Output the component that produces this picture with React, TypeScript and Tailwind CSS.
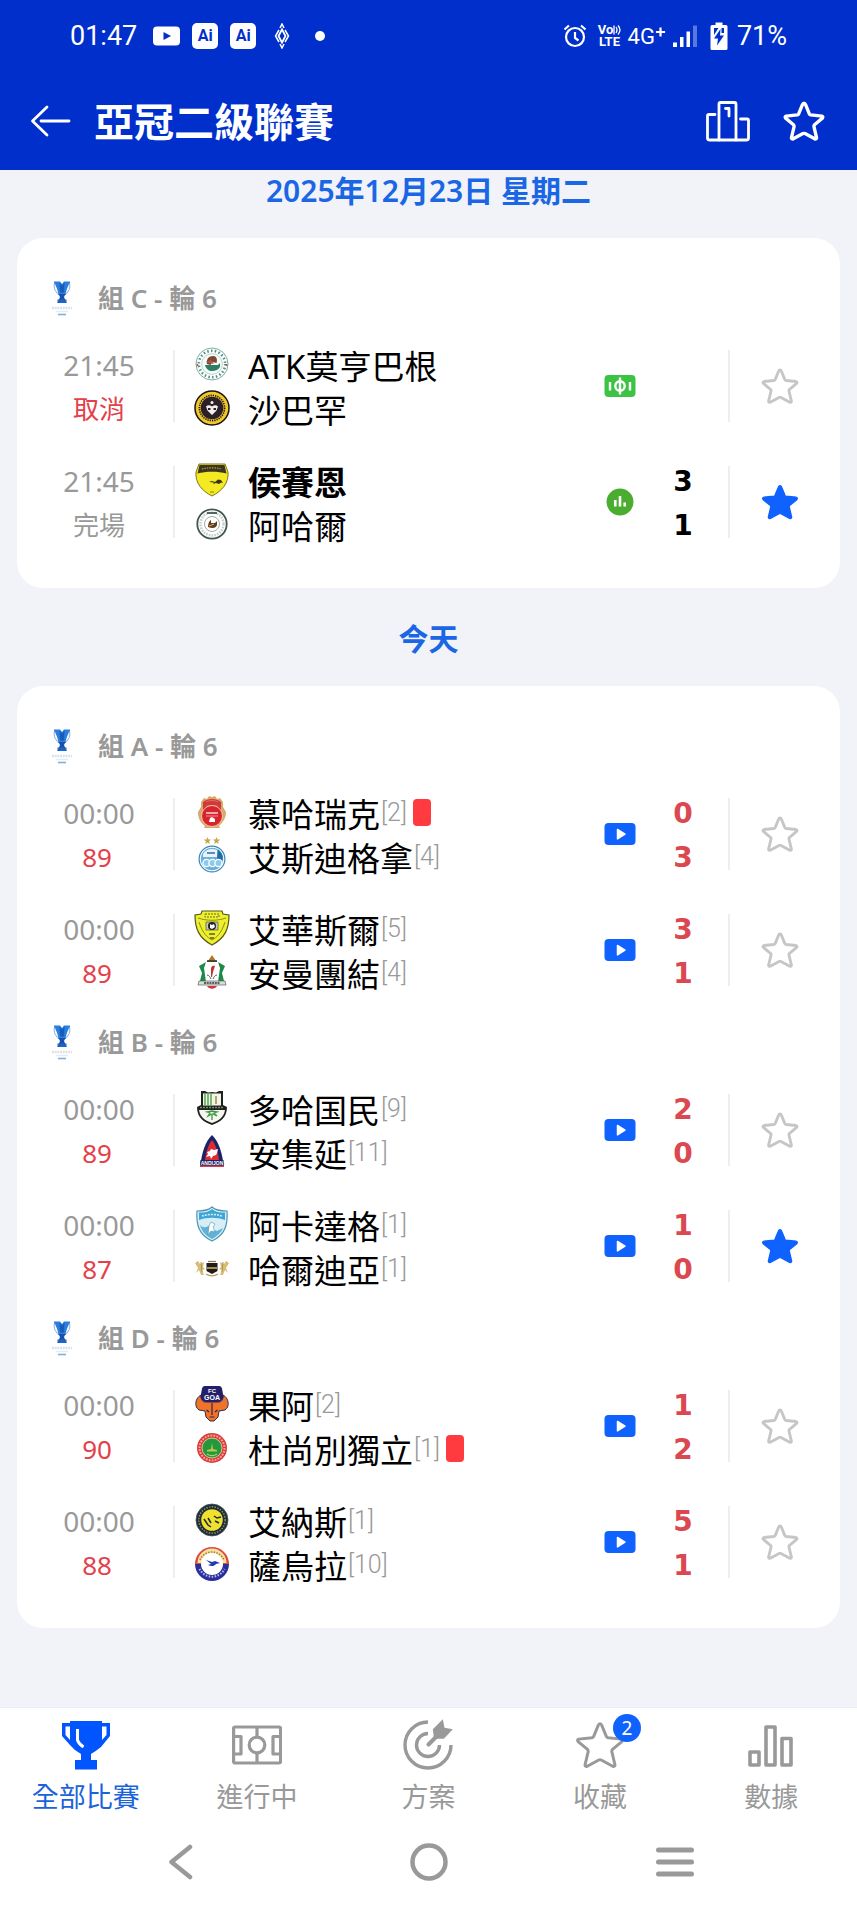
import React, { useState } from "react";

type Team = {
  name: string;
  rank?: number;
  redCard?: boolean;
  winner?: boolean;
  crest: React.ReactNode;
};

type Match = {
  id: string;
  time: string;
  status: string;
  state: "live" | "cancelled" | "finished";
  home: Team;
  away: Team;
  score?: [number, number];
  favourite?: boolean;
};

type Group = { title: string; matches: Match[] };

const crestClass = "size-9 overflow-visible";

const MohunBagan = () => (
  <svg viewBox="0 0 36 36" className={crestClass} aria-hidden="true">
    <circle cx="18" cy="18" r="16" fill="#fff" stroke="#6ea597" strokeWidth="0.900" />
    <circle cx="18" cy="18" r="13.200" fill="none" stroke="#4c8f80" strokeWidth="2.600" strokeDasharray="1.500 2.300" />
    <circle cx="18" cy="18" r="10.400" fill="#f7faf8" stroke="#8dbcae" strokeWidth="0.600" />
    <path d="M13 18C12 13 15 9.500 20 10c3 1 3.500 4 2.500 7l-4-1-2 3Z" fill="#7a4b34" />
    <path d="M11 19h13l2-2v4c-2 3-5 4-8 4s-6-2-7-6Z" fill="#2d7f63" />
    <path d="M12 16l5-2 3 4Z" fill="#c24c43" />
    <circle cx="3.500" cy="19" r="1" fill="#d33" />
    <circle cx="32.500" cy="19" r="1" fill="#d33" />
  </svg>
);

const Sabah = () => (
  <svg viewBox="0 0 36 36" className={crestClass} aria-hidden="true">
    <circle cx="18" cy="18" r="17" fill="#efc92c" stroke="#1b1512" strokeWidth="1.500" />
    <circle cx="18" cy="18" r="12.600" fill="none" stroke="#1b1512" strokeWidth="1.600" strokeDasharray="1.300 1" />
    <circle cx="18" cy="18" r="11.300" fill="#2b2029" />
    <path d="M12 16.500c2-2 4-1.500 6 0 2-1.500 4-2 6 0l-1.500 4L18 25l-4.500-4.500Z" fill="#f2efe9" />
    <path d="M14 18h2.500v2H14Zm5.500 0H22v2h-2.500Z" fill="#2b2029" />
    <circle cx="18" cy="12.500" r="1.500" fill="#f2efe9" />
  </svg>
);

const Hussein = () => (
  <svg viewBox="0 0 36 36" className={crestClass} aria-hidden="true">
    <path d="M5 2h26l3 8c1 11-6 19-16 24C8 29 1 21 2 10Z" fill="#f3ea22" stroke="#7c7620" strokeWidth="1" />
    <path d="M5.500 3h25l2 8.500C24 9 12 9 3.500 11.500Z" fill="#3c3620" />
    <path d="M8 7c6-1.500 14-1.500 20 0" fill="none" stroke="#a9a04b" strokeWidth="1.200" strokeDasharray="1.500 1" />
    <path d="M15 20l3-1 3 1 3-2.500 3 0.500 2 3-2-0.500-2 1.500-3-1-3 1 1-1.500Z" fill="#38331a" />
    <path d="M16 30h4" stroke="#8c8520" strokeWidth="1" />
  </svg>
);

const Ahal = () => (
  <svg viewBox="0 0 36 36" className={crestClass} aria-hidden="true">
    <circle cx="18" cy="18" r="14.700" fill="#fff" stroke="#41564f" strokeWidth="1.800" />
    <circle cx="18" cy="18" r="11.500" fill="none" stroke="#c5ccc9" strokeWidth="2.500" strokeDasharray="1.600 1.200" />
    <circle cx="18" cy="18" r="7.500" fill="#fff" stroke="#8b9792" strokeWidth="0.800" />
    <path d="M14 21c0-3 1-6 3-7l0 3 4 0 2-2v4c-1 3-4 4-9 2Z" fill="#5c3c22" />
    <path d="M15 20l5-2" stroke="#e3a740" strokeWidth="1.200" />
    <path d="M13 7h10" stroke="#30483f" strokeWidth="1.600" />
  </svg>
);

const Muharraq = () => (
  <svg viewBox="0 0 36 36" className={crestClass} aria-hidden="true">
    <path d="M7 8l3-4 3 1 2-3 3 1 3-1 2 3 3-1 3 4v5l3 5c0 7-4 11-7 14l1 2H10l1-2C7 29 4 25 4 18l3-5Z" fill="#d9a86b" />
    <path d="M9 8c5-4 13-4 18 0v8H9Z" fill="#cf3a38" />
    <path d="M12 8c4-2 8-2 12 0M12 12h12" fill="none" stroke="#e0705f" strokeWidth="1" />
    <ellipse cx="18" cy="22" rx="10.500" ry="10.500" fill="#d8242c" stroke="#f5e2cb" strokeWidth="0.800" />
    <path d="M12 19h12" fill="none" stroke="#fff" strokeWidth="1.200" />
    <path d="M12 22h12" stroke="#f3a7a3" strokeWidth="0.800" />
    <path d="M15 28l1-4 2-1 3 2v3Z" fill="#fff" />
  </svg>
);

const Esteghlal = () => (
  <svg viewBox="0 0 36 36" className={crestClass} aria-hidden="true">
    <path d="M13.500 -1l1 2.400 2.600 0.200-2 1.700 0.600 2.600-2.200-1.400-2.200 1.400 0.600-2.600-2-1.700 2.600-0.200Zm9 0l1 2.400 2.600 0.200-2 1.700 0.600 2.600-2.200-1.400-2.200 1.400 0.600-2.600-2-1.700 2.600-0.200Z" fill="#c7a64b" />
    <circle cx="18" cy="21" r="12.900" fill="#fff" stroke="#3b87b5" strokeWidth="1.200" />
    <circle cx="18" cy="21" r="11.200" fill="#67b1dc" />
    <path d="M9 16c3-5 9-6 14-4v7H9Z" fill="#e9f4fa" />
    <path d="M13 15h8" stroke="#2a6c9b" strokeWidth="1.500" />
    <path d="M24 11.500c5 4 6 9 3 14l-4-4Z" fill="#1e6da3" />
    <g fill="#8ccbed" stroke="#fff" strokeWidth="1.300">
      <circle cx="12.500" cy="25" r="3.600" />
      <circle cx="18.500" cy="25" r="3.600" />
      <circle cx="24.500" cy="25" r="3.600" />
    </g>
  </svg>
);

const Wasl = () => (
  <svg viewBox="0 0 36 36" className={crestClass} aria-hidden="true">
    <path d="M8 1h20l1 3 6 1c0 14-4 23-17 30C5 28 1 19 1 5l6-1Z" fill="#eef02c" stroke="#55571b" strokeWidth="1.200" />
    <path d="M4 8c9 3 19 3 28 0M5 12c4 12 8 15 13 18 5-3 9-6 13-18" fill="none" stroke="#8b8c28" strokeWidth="1" />
    <path d="M11 4h14v3H11Z" fill="none" stroke="#6c6d24" strokeWidth="1" strokeDasharray="2 1" />
    <path d="M12 12h12v8H12Z" fill="#c8cac1" stroke="#55571b" strokeWidth="0.700" />
    <circle cx="18" cy="16" r="4" fill="#222" />
    <path d="M16 14l2 1 2-1 1 3-3 2-2-1Z" fill="#fff" />
    <path d="M15 24h6M16 28h4" stroke="#5c5d20" strokeWidth="1.500" />
  </svg>
);

const Wehdat = () => (
  <svg viewBox="0 0 36 36" className={crestClass} aria-hidden="true">
    <path d="M14 7l4-6 4 6Z" fill="#b0762b" />
    <path d="M5 12l9-5h8l9 5-3 7 2 8H6l2-8Z" fill="#1d8a49" />
    <path d="M12 8h12l2 6-2 14H12l-2-14Z" fill="#fff" />
    <path d="M13 7h10" stroke="#3e3a22" strokeWidth="1.600" />
    <path d="M17 15c0-3 2-4 4-3l-1 3-1 3-1 5h-1Z" fill="#c62f33" />
    <path d="M13 21c2 0 3 2 4 4M23 21c-2 0-3 2-4 4" fill="none" stroke="#4b4b4b" strokeWidth="0.900" />
    <path d="M5 27h26l1 4H4Z" fill="#d9ded9" stroke="#59625c" strokeWidth="0.700" />
    <path d="M10 29h16" stroke="#333" strokeWidth="1.300" strokeDasharray="2 0.700" />
    <path d="M13 32h10c-2 3.500-8 3.500-10 0Z" fill="#cf3540" />
  </svg>
);

const DohaAhli = () => (
  <svg viewBox="0 0 36 36" className={crestClass} aria-hidden="true">
    <path d="M7 1h4l3 1.500L18 2l4 0.500L25 1h4v14l4 2c0 11-7 15-15 18C10 32 3 28 3 17l4-2Z" fill="#1e221c" />
    <path d="M9 3.500h18v12H9Z" fill="#f4f5e9" />
    <path d="M11 4v12M14 4v12M17 4v12" stroke="#5fae57" strokeWidth="1.600" />
    <path d="M22 6v8" stroke="#9a8c42" strokeWidth="1.500" />
    <path d="M5 20h26c-1 7-6 10.500-13 13C11 30.500 6 27 5 20Z" fill="#f6f8f0" />
    <path d="M6 17.500h24" stroke="#7e8477" strokeWidth="1.300" strokeDasharray="2 1" />
    <path d="M18 30v-6l-4 2 2-3-3-1 5-1 5 1-3 1 3 3-4-2" fill="none" stroke="#3d9a45" strokeWidth="1.300" />
  </svg>
);

const Andijan = () => (
  <svg viewBox="0 0 36 36" className={crestClass} aria-hidden="true">
    <path d="M18 1c7 7 10 17 12 32H6C8 18 11 8 18 1Z" fill="#1b2466" />
    <path d="M18 6c4 5 6 12 7 20H11c1-8 3-15 7-20Z" fill="#dc2b35" />
    <path d="M13 18l3-1 1-2 3 1 4-1-1 4-1 2-3 1-2 3-1-3-4 1 2-3Z" fill="#fff" />
    <path d="M6.500 26h23l0.700 5H6Z" fill="#1b2466" />
    <text x="18" y="30.500" textAnchor="middle" fontSize="5" fontWeight="700" fill="#fff" fontFamily="Liberation Sans, sans-serif">ANDIJON</text>
    <path d="M6 31.500h24V33H6Z" fill="#d43f4a" />
  </svg>
);

const Arkadag = () => (
  <svg viewBox="0 0 36 36" className={crestClass} aria-hidden="true">
    <path d="M18 1c3 3 8 4 15 4 1 14-2 24-15 30C5 29 2 19 3 5c7 0 12-1 15-4Z" fill="#d8eef7" stroke="#4a94b4" strokeWidth="1.200" />
    <path d="M18 3c3 3 8 3.500 13 3.500V14c-8-3-18-3-26 0V6.500C10 6.500 15 6 18 3Z" fill="#3fa6d4" />
    <path d="M8 10c6-2 14-2 20 0" fill="none" stroke="#d8eef7" strokeWidth="1.500" strokeDasharray="2 1" />
    <path d="M6 19c6 6 10-2 13-1l-1 5 5 2 6-3c-2 5-6 8-11 11C12 30 8 26 6 19Z" fill="#5fb1d5" />
    <path d="M15 20l2-4 4 2-2 3 2 5-4-1-3 4Z" fill="#fff" stroke="#5b93a8" strokeWidth="0.600" />
  </svg>
);

const Khaldiya = () => (
  <svg viewBox="0 0 36 36" className={crestClass} aria-hidden="true">
    <path d="M1 13l3-2 2 3 4-2-1 5 2 2-3 1 2 5H7l-2-5-3 3 2-5Z" fill="#d9bd73" />
    <path d="M35 13l-3-2-2 3-4-2 1 5-2 2 3 1-2 5h3l2-5 3 3-2-5Z" fill="#d9bd73" />
    <path d="M7 12l1 10M29 12l-1 10" stroke="#a18b50" strokeWidth="0.900" />
    <path d="M12.500 13h11v8l-5.500 3-5.500-3Z" fill="#1d1c18" />
    <path d="M13 17h10v2H13Z" fill="#a58e4e" />
    <path d="M14 11.500h8" stroke="#8f8049" strokeWidth="1.300" />
    <path d="M12 24c4 2.500 8 2.500 12 0" fill="none" stroke="#b29b5c" strokeWidth="1.100" />
  </svg>
);

const Goa = () => (
  <svg viewBox="0 0 36 36" className={crestClass} aria-hidden="true">
    <path d="M7 9C1 12 0 21 5 24l6 1 1 6 4 4h4l4-4 1-6 6-1c5-3 4-12-2-15 0 5-1 7-5 7H12c-4 0-5-2-5-7Z" fill="#ef7328" stroke="#33264f" strokeWidth="1" />
    <path d="M8 2.500Q8.500 0 10.500 0h15Q27.500 0 28 2.500L29.500 11Q28 16 24 16H12Q8 16 6.500 11Z" fill="#231f68" />
    <text x="18" y="6.800" textAnchor="middle" fontSize="6" fontWeight="700" fill="#fff" fontFamily="Liberation Sans, sans-serif">FC</text>
    <text x="18" y="13.800" textAnchor="middle" fontSize="7" fontWeight="700" fill="#fff" fontFamily="Liberation Sans, sans-serif">GOA</text>
    <path d="M12.500 24l2.500 2M23.500 24l-2.500 2M18 17v12M15.500 31h5" stroke="#33264f" strokeWidth="1.200" fill="none" />
  </svg>
);

const Istiklol = () => (
  <svg viewBox="0 0 36 36" className={crestClass} aria-hidden="true">
    <circle cx="18" cy="18" r="15" fill="#d93b3b" />
    <circle cx="18" cy="18" r="12.500" fill="none" stroke="#f0a79c" strokeWidth="2" strokeDasharray="1.800 1.200" />
    <circle cx="18" cy="18" r="10" fill="#25983f" stroke="#f1d9a8" strokeWidth="0.800" />
    <path d="M13 20l4-1 1-6 1 6 4 1v1.500H13Z" fill="#b9c84a" />
    <path d="M13 24c3 2 7 2 10 0" fill="none" stroke="#a5d36b" strokeWidth="1.200" />
  </svg>
);

const Nassr = () => (
  <svg viewBox="0 0 36 36" className={crestClass} aria-hidden="true">
    <circle cx="18" cy="18" r="16" fill="#1d2b3a" stroke="#4a5360" strokeWidth="0.800" />
    <circle cx="18" cy="18" r="13.200" fill="none" stroke="#8f9250" strokeWidth="1.500" strokeDasharray="1.500 1.300" />
    <circle cx="18" cy="18" r="10.800" fill="#efe12d" />
    <path d="M10 17l4 6 3 2M14 16l3 5M20 14l3 2 4-1M21 19l4 2" stroke="#1d2b3a" strokeWidth="1.500" fill="none" />
  </svg>
);

const Zawraa = () => (
  <svg viewBox="0 0 36 36" className={crestClass} aria-hidden="true">
    <path d="M1 18a17 17 0 0 1 34 0Z" fill="#e0483e" />
    <path d="M1 18a17 17 0 0 0 34 0Z" fill="#2b2f9e" />
    <path d="M3.500 17a14.500 14.500 0 0 1 29 0Z" fill="#f6e3a0" />
    <path d="M6 14a13 13 0 0 1 24 0" fill="none" stroke="#b5793a" strokeWidth="1.600" strokeDasharray="1.500 1.300" />
    <path d="M5.500 23a14 14 0 0 0 25 0" fill="none" stroke="#b8bbe2" strokeWidth="2" strokeDasharray="1.500 1.500" />
    <circle cx="18" cy="18" r="11" fill="#fff" />
    <path d="M12 14l6 2 3-1 5 2-4 1c-2 2.500-5 2.500-8 1l3-1Z" fill="#1f3cb0" />
  </svg>
);

const days: { label: string; groups: Group[] }[] = [
  {
    label: "2025年12月23日 星期二",
    groups: [
      {
        title: "組 C - 輪 6",
        matches: [
          { id: "c1", time: "21:45", status: "取消", state: "cancelled", home: { name: "ATK莫亨巴根", crest: <MohunBagan /> }, away: { name: "沙巴罕", crest: <Sabah /> } },
          { id: "c2", time: "21:45", status: "完場", state: "finished", home: { name: "侯賽恩", winner: true, crest: <Hussein /> }, away: { name: "阿哈爾", crest: <Ahal /> }, score: [3, 1], favourite: true },
        ],
      },
    ],
  },
  {
    label: "今天",
    groups: [
      {
        title: "組 A - 輪 6",
        matches: [
          { id: "a1", time: "00:00", status: "89", state: "live", home: { name: "慕哈瑞克", rank: 2, redCard: true, crest: <Muharraq /> }, away: { name: "艾斯迪格拿", rank: 4, crest: <Esteghlal /> }, score: [0, 3] },
          { id: "a2", time: "00:00", status: "89", state: "live", home: { name: "艾華斯爾", rank: 5, crest: <Wasl /> }, away: { name: "安曼團結", rank: 4, crest: <Wehdat /> }, score: [3, 1] },
        ],
      },
      {
        title: "組 B - 輪 6",
        matches: [
          { id: "b1", time: "00:00", status: "89", state: "live", home: { name: "多哈国民", rank: 9, crest: <DohaAhli /> }, away: { name: "安集延", rank: 11, crest: <Andijan /> }, score: [2, 0] },
          { id: "b2", time: "00:00", status: "87", state: "live", home: { name: "阿卡達格", rank: 1, crest: <Arkadag /> }, away: { name: "哈爾迪亞", rank: 1, crest: <Khaldiya /> }, score: [1, 0], favourite: true },
        ],
      },
      {
        title: "組 D - 輪 6",
        matches: [
          { id: "d1", time: "00:00", status: "90", state: "live", home: { name: "果阿", rank: 2, crest: <Goa /> }, away: { name: "杜尚別獨立", rank: 1, redCard: true, crest: <Istiklol /> }, score: [1, 2] },
          { id: "d2", time: "00:00", status: "88", state: "live", home: { name: "艾納斯", rank: 1, crest: <Nassr /> }, away: { name: "薩烏拉", rank: 10, crest: <Zawraa /> }, score: [5, 1] },
        ],
      },
    ],
  },
];

const StarIcon = ({ className }: { className: string }) => (
  <svg viewBox="0 0 40 40" className={className} strokeLinejoin="round" aria-hidden="true">
    <path d="M20 3Q21 3 21.500 4.500L25 13Q25.500 14 26.500 14.200L37 15.300Q38.600 15.800 37.500 17.300L30 23.500Q29.200 24.300 29.500 25.500L32 36Q31.800 37.500 30.200 37L21 32Q20 31.500 19 32L9.800 37Q8.200 37.500 8 36L10.500 25.500Q10.800 24.300 10 23.500L2.500 17.300Q1.400 15.800 3 15.300L13.500 14.200Q14.500 14 15 13L18.500 4.500Q19 3 20 3Z" />
  </svg>
);

const CupLogo = () => (
  <svg viewBox="0 0 26 36" className="h-9 w-[26px]" aria-hidden="true">
    <path d="M5.500 3.500C4.500 8 6 12 10.500 15M20.500 3.500C21.500 8 20 12 15.500 15" fill="none" stroke="#9dbbe8" strokeWidth="1.200" />
    <path d="M5 1.500h6l2 2.500 2-2.500h6q0.500 1.500-1 2.500-2 4-3.500 10l0.500 1h-8l0.500-1Q8 8 6 4 4.500 3 5 1.500Z" fill="#2b7fdc" />
    <path d="M10.500 2.500l2.500 3 2.500-3-0.500 10h-4Z" fill="#195bbb" />
    <path d="M9.500 14h7l-1.500 3 2.500 6h-9l2.500-6Z" fill="#1b4fae" />
    <path d="M8.500 19.500h9V23h-9Z" fill="#1f62c8" />
    <path d="M3 28h20" stroke="#dde1e8" strokeWidth="2.400" strokeDasharray="2 0.700" />
    <path d="M7 31.500h12" stroke="#e6ebf1" strokeWidth="1.500" />
    <path d="M9 34.500h8" stroke="#7fb0dc" strokeWidth="1.600" />
  </svg>
);

const StateIcon = ({ state }: { state: Match["state"] }) => {
  if (state === "cancelled")
    return (
      <svg viewBox="0 0 32 24" className="h-6 w-8" role="img" aria-label="陣容">
        <rect x="0.500" y="1" width="31" height="22" rx="4" fill="#3cc343" />
        <g fill="none" stroke="#fff" strokeWidth="2.400">
          <path d="M6 8v8.500M26 8v8.500M16 3.500v17" />
          <circle cx="16" cy="12" r="4.700" />
        </g>
      </svg>
    );
  if (state === "finished")
    return (
      <svg viewBox="0 0 28 28" className="size-7" role="img" aria-label="統計">
        <circle cx="14" cy="14" r="13.500" fill="#4aad2f" />
        <path d="M9.300 12v6.500M14 8v10.500M18.700 14.500v4" stroke="#fff" strokeWidth="2.600" />
      </svg>
    );
  return (
    <svg viewBox="0 0 32 24" className="h-6 w-8" role="img" aria-label="直播">
      <rect x="0.500" y="1" width="31" height="22" rx="4" fill="#0f62fe" />
      <path d="M13.500 7.500l7.500 4.700-7.500 4.700Z" fill="#fff" stroke="#fff" strokeWidth="1.500" strokeLinejoin="round" />
    </svg>
  );
};

const TeamLine = ({ team }: { team: Team }) => (
  <div className="flex h-11 items-center">
    <span className="flex w-[73px] shrink-0 justify-center">{team.crest}</span>
    <span className={team.winner ? "pt-[5px] text-[33px] leading-[44px] font-bold text-black" : "pt-[5px] text-[33px] leading-[44px] text-black"}>{team.name}</span>
    {team.rank !== undefined && <span className="ml-px pt-[2px] font-['Roboto'] text-[25px] leading-[44px] font-light text-[#999999]">[{team.rank}]</span>}
    {team.redCard && <span role="img" aria-label="紅牌" className="ml-[6px] h-[27px] w-[18px] rounded-sm bg-[#ff3b40]" />}
  </div>
);

const MatchRow = ({ match }: { match: Match }) => {
  const [starred, setStarred] = useState(!!match.favourite);
  return (
    <li className="flex h-[116px] items-center">
      <div className="flex w-[156px] shrink-0 flex-col items-center pt-[2px] pl-2 text-[28px] leading-[44px] text-[#999999]">
        <span>{match.time}</span>
        <span className={match.state === "finished" ? "text-[26px]" : match.state === "live" ? "pr-1 text-[26px] text-[#e5404a]" : "text-[26px] text-[#e5404a]"}>{match.status}</span>
      </div>
      <div className="h-[72px] w-[2px] shrink-0 bg-[#eeeeee]" />
      <div className="min-w-0 flex-1">
        <TeamLine team={match.home} />
        <TeamLine team={match.away} />
      </div>
      <div className="flex w-10 shrink-0 justify-center">
        <StateIcon state={match.state} />
      </div>
      <div className={match.state === "live" ? "w-[88px] shrink-0 pt-[4px] pr-[2px] text-center font-['DejaVu_Sans'] text-[28px] leading-[44px] font-bold text-[#dc4850]" : "w-[88px] shrink-0 pt-[4px] pr-[2px] text-center font-['DejaVu_Sans'] text-[28px] leading-[44px] font-bold text-black"}>
        {match.score?.map((goals, i) => <div key={i}>{goals}</div>)}
      </div>
      <div className="h-[72px] w-[2px] shrink-0 bg-[#eeeeee]" />
      <div className="flex w-[110px] shrink-0 justify-center pr-[11px]">
        <button type="button" aria-label="收藏比賽" aria-pressed={starred} onClick={() => setStarred(!starred)}>
          <StarIcon className={starred ? "size-[38px] fill-[#0f62fe] stroke-[#0f62fe] stroke-[2]" : "size-[38px] fill-none stroke-[#c6c6c6] stroke-[3]"} />
        </button>
      </div>
    </li>
  );
};

const StatusBar = () => (
  <div className="flex h-[72px] items-center justify-between px-[70px] font-['Roboto'] text-[27px] leading-none text-white">
    <div className="flex items-center">
      <span>01:47</span>
      <svg viewBox="0 0 27 20" className="ml-4 h-5 w-[27px]" aria-hidden="true">
        <rect y="0.500" width="27" height="19" rx="4" fill="#fff" />
        <path d="M10.500 6l7.500 4-7.500 4Z" fill="#002fcc" />
      </svg>
      <span className="ml-3 flex size-[26px] items-center justify-center rounded-[5px] bg-white text-base font-bold text-[#002fcc]">Ai</span>
      <span className="ml-3 flex size-[26px] items-center justify-center rounded-[5px] bg-white text-base font-bold text-[#002fcc]">Ai</span>
      <svg viewBox="0 0 16 26" className="ml-[18px] h-[26px] w-4" fill="none" stroke="#fff" strokeWidth="1.500" aria-hidden="true">
        <path d="M6 5L8 1l2 4M6 21l2 4 2-4" />
        <path d="M5 7L1.500 13 5 19M11 7l3.500 6L11 19" />
        <path d="M8 6.500L11.500 13 8 19.500 4.500 13Z" strokeWidth="1.800" />
      </svg>
      <span className="ml-[25px] size-[10px] rounded-full bg-white" />
    </div>
    <div className="flex items-center">
      <svg viewBox="0 0 24 24" className="size-6" fill="none" stroke="#fff" strokeWidth="2.200" aria-hidden="true">
        <circle cx="12" cy="13" r="9" />
        <path d="M12 8v6l3.500 2.500M1.500 5.500L6 1.500M22.500 5.500L18 1.500" />
      </svg>
      <span className="ml-[11px] flex w-6 flex-col items-center text-[13px] leading-3 font-bold">
        <span className="flex items-center">
          Vo
          <svg viewBox="0 0 8 10" className="h-[10px] w-2" fill="none" stroke="#fff" strokeWidth="1.300" aria-hidden="true">
            <path d="M1 0.500v9M3 2q2 3 0 6M5 0.500q4 4.500 0 9" />
          </svg>
        </span>
        <span>LTE</span>
      </span>
      <span className="ml-[6px] flex items-start">
        <span className="text-[22px] leading-[23px]">4G</span>
        <svg viewBox="0 0 12 12" className="mt-px h-3 w-[11px]" stroke="#fff" strokeWidth="2.400" aria-hidden="true"><path d="M6 1v10M1 6h10" /></svg>
      </span>
      <svg viewBox="0 0 26 24" className="ml-[6px] h-6 w-[26px]" fill="#fff" aria-hidden="true">
        <path d="M1 18.500h4V23H1ZM8 13h3.500v10H8ZM14.500 7.500H18V23h-3.500Z" />
        <path d="M21 1.500h4V23h-4Z" opacity="0.350" />
      </svg>
      <svg viewBox="0 0 18 28" className="ml-3 h-7 w-[18px]" aria-hidden="true">
        <path d="M5.500 0.500h7V3H16a1.500 1.500 0 0 1 1.500 1.500v22A1.500 1.500 0 0 1 16 28H2a1.500 1.500 0 0 1-1.500-1.500v-22A1.500 1.500 0 0 1 2 3h3.500Z" fill="#fff" />
        <path d="M4 6h4.500L4 13ZM11.500 6H14v5l-2.500 0ZM10.500 7L4 16.500h4L7 23.500l7-10h-4Z" fill="#002fcc" />
      </svg>
      <span className="ml-[9px]">71%</span>
    </div>
  </div>
);

const AppBar = () => (
  <div className="flex h-[98px] items-center pr-8 pl-[30px] text-white">
    <button type="button" aria-label="返回">
      <svg viewBox="0 0 42 32" className="h-8 w-[42px]" fill="none" stroke="#fff" strokeWidth="2.800" strokeLinecap="round" strokeLinejoin="round" aria-hidden="true">
        <path d="M17 2L2.500 16 17 30M11 16h28" />
      </svg>
    </button>
    <h1 className="ml-[22px] flex-1 pt-[2px] text-[40px] leading-[48px] font-bold">亞冠二級聯賽</h1>
    <button type="button" aria-label="排名">
      <svg viewBox="0 0 46 42" className="h-[42px] w-[46px]" fill="none" stroke="#fff" strokeWidth="2.800" strokeLinejoin="round" strokeLinecap="round" aria-hidden="true">
        <path d="M14 40V4q0-1.500 1.500-1.500h14Q31 2.500 31 4v36" />
        <path d="M10 14.500H4Q2.500 14.500 2.500 16v22q0 2 2 2h37q2 0 2-2V20.500q0-1.500-1.500-1.500h-6.500" />
        <path d="M20.500 8.500H24V16" />
      </svg>
    </button>
    <button type="button" aria-label="收藏聯賽" className="ml-8">
      <StarIcon className="size-[42px] fill-none stroke-white stroke-[3.2]" />
    </button>
  </div>
);

const tabs = [
  {
    label: "全部比賽",
    icon: (
      <svg viewBox="0 0 50 50" className="size-[50px]" aria-hidden="true">
        <path d="M9 1h32v2h8v13L40 27q-5 4-10 7v6h6v9.500H14V40h6v-6Q13 30 9 25L1 16V3h8Z" fill="#0055ff" />
        <path d="M4.500 6.500H9V20l-4.500-5ZM45.500 6.500H41V20l4.500-5Z" fill="#fff" />
        <path d="M16.500 9v11q1 3.500 6 7" fill="none" stroke="#fff" strokeWidth="3" />
      </svg>
    ),
  },
  {
    label: "進行中",
    icon: (
      <svg viewBox="0 0 50 50" className="size-[50px]" fill="none" stroke="#999" strokeWidth="3.200" strokeLinejoin="round" aria-hidden="true">
        <rect x="1.600" y="7" width="47" height="36" rx="1.500" />
        <path d="M25 7v10M25 33v10M2 16.500h7V34H2M48 16.500h-7V34h7" />
        <circle cx="25" cy="25" r="7.800" />
      </svg>
    ),
  },
  {
    label: "方案",
    icon: (
      <svg viewBox="0 0 50 50" className="size-[50px] overflow-visible" fill="none" stroke="#999" strokeWidth="3.400" aria-hidden="true">
        <path d="M25 2A23 23 0 1 0 48 25" />
        <path d="M25 13.500A11.500 11.500 0 1 0 36.500 25" />
        <path d="M25.500 24.500L34 16" strokeWidth="4" strokeLinecap="round" />
        <path d="M29.800 9.300L39.800 -0.700 41.500 7.700 49.800 9.300 40.800 18.700H31Z" fill="#999" stroke="none" />
      </svg>
    ),
  },
  { label: "收藏", badge: 2, icon: <StarIcon className="size-[50px] fill-none stroke-[#999999] stroke-[2.4]" /> },
  {
    label: "數據",
    icon: (
      <svg viewBox="0 0 50 50" className="size-[50px]" fill="none" stroke="#999" strokeWidth="3.600" strokeLinejoin="round" aria-hidden="true">
        <rect x="4" y="32" width="9" height="13" />
        <rect x="20" y="7" width="9" height="38" />
        <rect x="36" y="18.500" width="9" height="26.500" />
      </svg>
    ),
  },
];

export default function App() {
  const [active, setActive] = useState(0);
  return (
    <div lang="zh-Hant" className="flex min-h-screen flex-col bg-[#f1f3f8] font-['Noto_Sans','Noto_Sans_CJK_TC',sans-serif]">
      <header className="bg-[#002fcc]">
        <StatusBar />
        <AppBar />
      </header>

      <main className="flex-1 space-y-[30px] px-[17px]">
        {days.map((day) => (
          <section key={day.label}>
            <h2 className="mb-[26px] text-center text-[30px] leading-[42px] font-semibold text-[#1a66e4]">{day.label}</h2>
            <div className="rounded-[26px] bg-white pt-[26px] pb-7">
              {day.groups.map((group) => (
                <div key={group.title}>
                  <h3 className="flex h-16 items-center pt-1 pl-8 text-[26px] leading-9 font-semibold text-[#999999]">
                    <CupLogo />
                    <span className="ml-[23px]">{group.title}</span>
                  </h3>
                  <ul>
                    {group.matches.map((match) => (
                      <MatchRow key={match.id} match={match} />
                    ))}
                  </ul>
                </div>
              ))}
            </div>
          </section>
        ))}
      </main>

      <footer className="border-t border-[#ebedf0] bg-white">
        <nav className="grid grid-cols-5 pt-3">
          {tabs.map((tab, i) => (
            <button
              key={tab.label}
              type="button"
              onClick={() => setActive(i)}
              className={i === active ? "flex flex-col items-center text-[27px] leading-9 text-[#1b63da]" : "flex flex-col items-center text-[27px] leading-9 text-[#999999]"}
            >
              <span className="relative">
                {tab.icon}
                {tab.badge && (
                  <span className="absolute -top-[6px] -right-4 flex size-7 items-center justify-center rounded-full bg-[#0f62fe] text-[19px] leading-none text-white">{tab.badge}</span>
                )}
              </span>
              <span className="mt-[9px]">{tab.label}</span>
            </button>
          ))}
        </nav>
        <div className="flex h-[93px] items-center justify-between px-[162px]">
          <button type="button" aria-label="返回">
            <svg viewBox="0 0 40 36" className="h-9 w-10" fill="none" stroke="#999" strokeWidth="4.500" strokeLinecap="round" strokeLinejoin="round" aria-hidden="true">
              <path d="M28 3L9.500 18 28 33" />
            </svg>
          </button>
          <button type="button" aria-label="主畫面">
            <svg viewBox="0 0 40 40" className="size-10" fill="none" stroke="#999" strokeWidth="4.500" aria-hidden="true">
              <circle cx="20" cy="20" r="16.500" />
            </svg>
          </button>
          <button type="button" aria-label="最近使用">
            <svg viewBox="0 0 40 36" className="h-9 w-10" stroke="#999" strokeWidth="5" strokeLinecap="round" aria-hidden="true">
              <path d="M3.500 6h33M3.500 18h33M3.500 30h33" />
            </svg>
          </button>
        </div>
      </footer>
    </div>
  );
}
